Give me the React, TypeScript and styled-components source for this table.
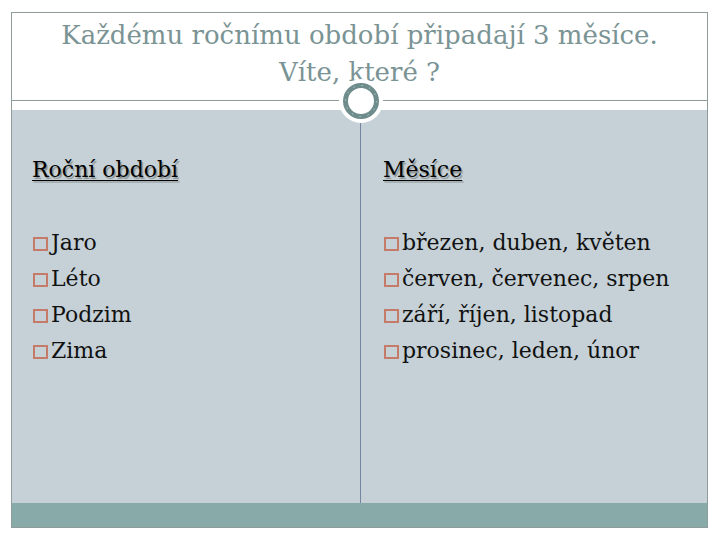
import styled, { createGlobalStyle } from 'styled-components'

const GlobalStyle = createGlobalStyle`
  html, body {
    margin: 0;
    padding: 0;
    background: #ffffff;
  }
  body {
    width: 720px;
    height: 540px;
    overflow: hidden;
    font-family: "DejaVu Serif", "Liberation Serif", serif;
  }
`

const seasons = ['Jaro', 'Léto', 'Podzim', 'Zima']
const months = [
  'březen, duben, květen',
  'červen, červenec, srpen',
  'září, říjen, listopad',
  'prosinec, leden, únor',
]

export default function App() {
  return (
    <>
      <GlobalStyle />
      <Slide>
        <TitleArea>
          <Title>
            Každému ročnímu období připadají 3 měsíce.
            <br />
            Víte, které ?
          </Title>
        </TitleArea>
        <Rule />
        <Gap />
        <Body>
          <Column>
            <Heading>Roční období</Heading>
            <Items>
              {seasons.map((s) => (
                <Item key={s}>
                  <Bullet />
                  {s}
                </Item>
              ))}
            </Items>
          </Column>
          <Column $divider>
            <Heading>Měsíce</Heading>
            <Items>
              {months.map((m) => (
                <Item key={m}>
                  <Bullet />
                  {m}
                </Item>
              ))}
            </Items>
          </Column>
        </Body>
        <FooterBar />
        <Ring>
          <svg width="46" height="46" viewBox="0 0 46 46">
            <circle cx="23" cy="23" r="22" fill="#ffffff" />
            <circle cx="23" cy="23" r="15.5" fill="none" stroke="#6f8c8c" strokeWidth="5" />
            <circle
              cx="23"
              cy="23"
              r="15.5"
              fill="none"
              stroke="#c9d6d6"
              strokeWidth="0.8"
              strokeDasharray="1.5 6.6"
            />
          </svg>
        </Ring>
      </Slide>
    </>
  )
}

// スライド枠
const Slide = styled.div`
  position: relative;
  margin: 12px 0 0 11px;
  width: 697px;
  height: 516px;
  box-sizing: border-box;
  border: 1px solid #8e9c9c;
  display: flex;
  flex-direction: column;
  background: #ffffff;
`

const TitleArea = styled.div`
  height: 87px;
  display: flex;
  justify-content: center;
`

const Title = styled.h1`
  margin: 0;
  padding-top: 4px;
  font-family: "DejaVu Serif", "Liberation Serif", serif;
  font-weight: normal;
  font-size: 26px;
  line-height: 37px;
  color: #7a9394;
  text-align: center;
`

const Rule = styled.div`
  height: 1px;
  background: #8e9c9c;
`

const Gap = styled.div`
  height: 9px;
`

const Body = styled.div`
  flex: 1;
  display: grid;
  grid-template-columns: 348px 1fr;
  background: #c5d1d7;
`

const Column = styled.div<{ $divider?: boolean }>`
  padding: ${(p) => (p.$divider ? '40px' : '46px')} 0 0 ${(p) => (p.$divider ? '22px' : '20px')};
  border-left: ${(p) => (p.$divider ? '1px solid #7585a0' : 'none')};
  margin-top: ${(p) => (p.$divider ? '6px' : '0')};
`

const Heading = styled.div`
  font-size: 22px;
  line-height: 28px;
  color: #000000;
  text-decoration: underline;
  text-decoration-thickness: 1px;
  text-underline-offset: 3px;
  text-shadow: 1.5px 1.5px 1px #8a9090;
`

const Items = styled.ul`
  list-style: none;
  margin: 41px 0 0;
  padding: 0;
`

const Item = styled.li`
  display: flex;
  align-items: center;
  font-size: 22px;
  line-height: 36px;
  color: #111111;
`

const Bullet = styled.span`
  display: inline-block;
  width: 15px;
  height: 14px;
  box-sizing: border-box;
  border: 2px solid #c47c68;
  margin: 2px 3px 0 1px;
`

const FooterBar = styled.div`
  height: 24px;
  background: #88aaa9;
`

// タイトル下の丸飾り
const Ring = styled.div`
  position: absolute;
  left: 326px;
  top: 65px;
  width: 46px;
  height: 46px;
  line-height: 0;
`
